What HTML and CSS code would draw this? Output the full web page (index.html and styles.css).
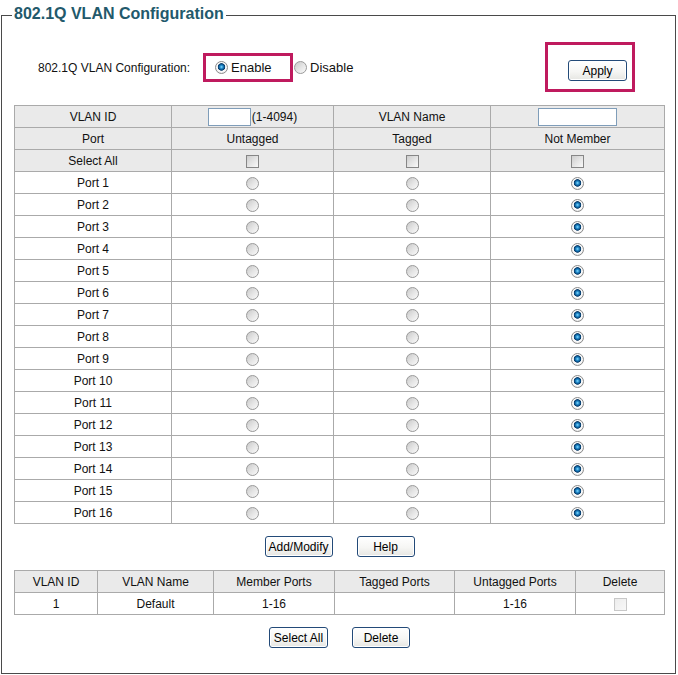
FILE: index.html
```html
<!DOCTYPE html>
<html>
<head>
<meta charset="utf-8">
<title>802.1Q VLAN Configuration</title>
<link rel="stylesheet" href="styles.css">
</head>
<body>
<fieldset class="panel">
  <legend class="panel-title">802.1Q VLAN Configuration</legend>

  <div class="cfg">
    <span class="cfg-label">802.1Q VLAN Configuration:</span>
    <label class="hl hl-enable"><input class="rd" type="radio" name="mode" checked><span class="opt-text">Enable</span></label>
    <label class="opt-disable"><input class="rd" type="radio" name="mode"><span class="opt-text">Disable</span></label>
    <div class="hl hl-apply"><button class="btn btn-apply" type="button">Apply</button></div>
  </div>

  <table class="grid ports">
    <colgroup>
      <col class="c1"><col class="c2"><col class="c3"><col class="c4">
    </colgroup>
    <tr class="head">
      <td>VLAN ID</td>
      <td><span class="idwrap"><input class="txt txt-id" type="text"><span>(1-4094)</span></span></td>
      <td>VLAN Name</td>
      <td><input class="txt txt-name" type="text"></td>
    </tr>
    <tr class="head">
      <td>Port</td><td>Untagged</td><td>Tagged</td><td>Not Member</td>
    </tr>
    <tr class="head">
      <td>Select All</td>
      <td><input class="cb" type="checkbox"></td>
      <td><input class="cb" type="checkbox"></td>
      <td><input class="cb" type="checkbox"></td>
    </tr>
    <tr><td>Port 1</td><td><input class="rd" type="radio" name="p1"></td><td><input class="rd" type="radio" name="p1"></td><td><input class="rd" type="radio" name="p1" checked></td></tr>
    <tr><td>Port 2</td><td><input class="rd" type="radio" name="p2"></td><td><input class="rd" type="radio" name="p2"></td><td><input class="rd" type="radio" name="p2" checked></td></tr>
    <tr><td>Port 3</td><td><input class="rd" type="radio" name="p3"></td><td><input class="rd" type="radio" name="p3"></td><td><input class="rd" type="radio" name="p3" checked></td></tr>
    <tr><td>Port 4</td><td><input class="rd" type="radio" name="p4"></td><td><input class="rd" type="radio" name="p4"></td><td><input class="rd" type="radio" name="p4" checked></td></tr>
    <tr><td>Port 5</td><td><input class="rd" type="radio" name="p5"></td><td><input class="rd" type="radio" name="p5"></td><td><input class="rd" type="radio" name="p5" checked></td></tr>
    <tr><td>Port 6</td><td><input class="rd" type="radio" name="p6"></td><td><input class="rd" type="radio" name="p6"></td><td><input class="rd" type="radio" name="p6" checked></td></tr>
    <tr><td>Port 7</td><td><input class="rd" type="radio" name="p7"></td><td><input class="rd" type="radio" name="p7"></td><td><input class="rd" type="radio" name="p7" checked></td></tr>
    <tr><td>Port 8</td><td><input class="rd" type="radio" name="p8"></td><td><input class="rd" type="radio" name="p8"></td><td><input class="rd" type="radio" name="p8" checked></td></tr>
    <tr><td>Port 9</td><td><input class="rd" type="radio" name="p9"></td><td><input class="rd" type="radio" name="p9"></td><td><input class="rd" type="radio" name="p9" checked></td></tr>
    <tr><td>Port 10</td><td><input class="rd" type="radio" name="p10"></td><td><input class="rd" type="radio" name="p10"></td><td><input class="rd" type="radio" name="p10" checked></td></tr>
    <tr><td>Port 11</td><td><input class="rd" type="radio" name="p11"></td><td><input class="rd" type="radio" name="p11"></td><td><input class="rd" type="radio" name="p11" checked></td></tr>
    <tr><td>Port 12</td><td><input class="rd" type="radio" name="p12"></td><td><input class="rd" type="radio" name="p12"></td><td><input class="rd" type="radio" name="p12" checked></td></tr>
    <tr><td>Port 13</td><td><input class="rd" type="radio" name="p13"></td><td><input class="rd" type="radio" name="p13"></td><td><input class="rd" type="radio" name="p13" checked></td></tr>
    <tr><td>Port 14</td><td><input class="rd" type="radio" name="p14"></td><td><input class="rd" type="radio" name="p14"></td><td><input class="rd" type="radio" name="p14" checked></td></tr>
    <tr><td>Port 15</td><td><input class="rd" type="radio" name="p15"></td><td><input class="rd" type="radio" name="p15"></td><td><input class="rd" type="radio" name="p15" checked></td></tr>
    <tr><td>Port 16</td><td><input class="rd" type="radio" name="p16"></td><td><input class="rd" type="radio" name="p16"></td><td><input class="rd" type="radio" name="p16" checked></td></tr>
  </table>

  <div class="btnrow btnrow-mid">
    <button class="btn btn-add" type="button">Add/Modify</button>
    <button class="btn btn-help" type="button">Help</button>
  </div>

  <table class="grid vlans">
    <colgroup>
      <col class="v1"><col class="v2"><col class="v3"><col class="v4"><col class="v5"><col class="v6">
    </colgroup>
    <tr class="head">
      <td>VLAN ID</td><td>VLAN Name</td><td>Member Ports</td><td>Tagged Ports</td><td>Untagged Ports</td><td>Delete</td>
    </tr>
    <tr>
      <td>1</td><td>Default</td><td>1-16</td><td></td><td>1-16</td><td><input class="cb" type="checkbox" disabled></td>
    </tr>
  </table>

  <div class="btnrow btnrow-bottom">
    <button class="btn btn-selall" type="button">Select All</button>
    <button class="btn btn-del" type="button">Delete</button>
  </div>
</fieldset>
</body>
</html>
```

FILE: styles.css
```css
html, body {
  margin: 0;
  padding: 0;
  background: #fff;
}
body {
  font-family: "Liberation Sans", Arial, sans-serif;
  font-size: 12px;
  color: #111;
}

.panel {
  box-sizing: border-box;
  width: 675px;
  height: 669px;
  margin: 5px 0 0 1px;
  padding: 0 10px 0 12px;
  border: 1px solid #4a4a4a;
  min-width: 0;
}
.panel-title {
  margin-left: -2px;
  padding: 0 2px 2px;
  font-size: 16px;
  line-height: 18px;
  font-weight: bold;
  color: #22596b;
}

/* configuration row */
.cfg {
  display: flex;
  align-items: flex-start;
  padding-left: 24px;
  padding-right: 30px;
  margin-top: 17px;
}
.cfg-label {
  margin-top: 19px;
  line-height: 14px;
}
.hl {
  box-sizing: border-box;
  border: 3px solid #bf1a5e;
}
.hl-enable {
  display: flex;
  align-items: center;
  width: 90px;
  height: 29px;
  margin-left: 13px;
  margin-top: 11px;
  padding-left: 9px;
  font-size: 13px;
}
.opt-disable {
  display: flex;
  align-items: center;
  height: 29px;
  margin-top: 11px;
  margin-left: 1px;
  font-size: 13px;
}
.opt-text {
  margin-left: 3px;
}
.hl-apply {
  width: 90px;
  height: 50px;
  margin-left: auto;
  padding: 15px 0 0 20px;
}

/* radios & checkboxes */
.rd {
  appearance: none;
  -webkit-appearance: none;
  box-sizing: border-box;
  width: 13px;
  height: 13px;
  margin: 0;
  border-radius: 50%;
  border: 1px solid #9a9a9a;
  background: linear-gradient(135deg, #c8c8c8 0%, #e4e4e4 50%, #fafafa 100%);
  vertical-align: middle;
}
.rd:checked {
  border-color: #8c8c8c;
  background: radial-gradient(circle at 50% 45%, #8fdcff 0, #2a95d3 1.4px, #0d5c98 2.6px, #093a66 3.4px, #ffffff 4.1px, #f1f1f1 5.5px, #dadada 6.5px);
}
.cb {
  appearance: none;
  -webkit-appearance: none;
  box-sizing: border-box;
  width: 13px;
  height: 13px;
  margin: 0;
  border: 1px solid #868686;
  background: linear-gradient(135deg, #cdcdcd 0%, #e6e6e6 55%, #f9f9f9 100%);
  vertical-align: middle;
}
.cb:disabled {
  border-color: #c8c8c8;
  background: linear-gradient(135deg, #ececec, #f8f8f8);
}

/* tables */
.grid {
  border-collapse: collapse;
  table-layout: fixed;
  width: 650px;
}
.grid td {
  height: 21px;
  padding: 0;
  border: 1px solid #aaaaaa;
  text-align: center;
  vertical-align: middle;
  line-height: 14px;
  white-space: nowrap;
}
.grid .head td {
  background: #eaeaea;
}
.ports { margin-top: 13px; }
.c1 { width: 157px; }
.c2 { width: 162px; }
.c3 { width: 157px; }
.c4 { width: 174px; }

.v1 { width: 83px; }
.v2 { width: 116px; }
.v3 { width: 121px; }
.v4 { width: 120px; }
.v5 { width: 121px; }
.v6 { width: 89px; }

.idwrap {
  display: inline-flex;
  align-items: center;
}
.txt {
  box-sizing: border-box;
  height: 18px;
  margin: 0;
  padding: 0 2px;
  border: 1px solid #7f9db9;
  background: #fff;
  font: 12px "Liberation Sans", Arial, sans-serif;
  vertical-align: middle;
}
.txt-id { width: 43px; margin-right: 1px; }
.txt-name { width: 79px; }

/* buttons */
.btn {
  box-sizing: border-box;
  height: 21px;
  padding: 0;
  margin: 0;
  border: 1px solid #234a78;
  border-radius: 3px;
  background: linear-gradient(#ffffff 0%, #f6f6f4 55%, #e6e6e2 100%);
  font: 12px "Liberation Sans", Arial, sans-serif;
  color: #000;
  box-shadow: inset 0 0 0 1px #fff;
}
.btn-apply { width: 59px; }
.btn-add { width: 68px; }
.btn-help { width: 58px; }
.btn-selall { width: 59px; }
.btn-del { width: 58px; }

.btnrow {
  display: flex;
  justify-content: center;
  gap: 24px;
}
.btnrow-mid {
  margin: 12px 0 13px;
}
.btnrow-bottom {
  margin-top: 12px;
}
```
